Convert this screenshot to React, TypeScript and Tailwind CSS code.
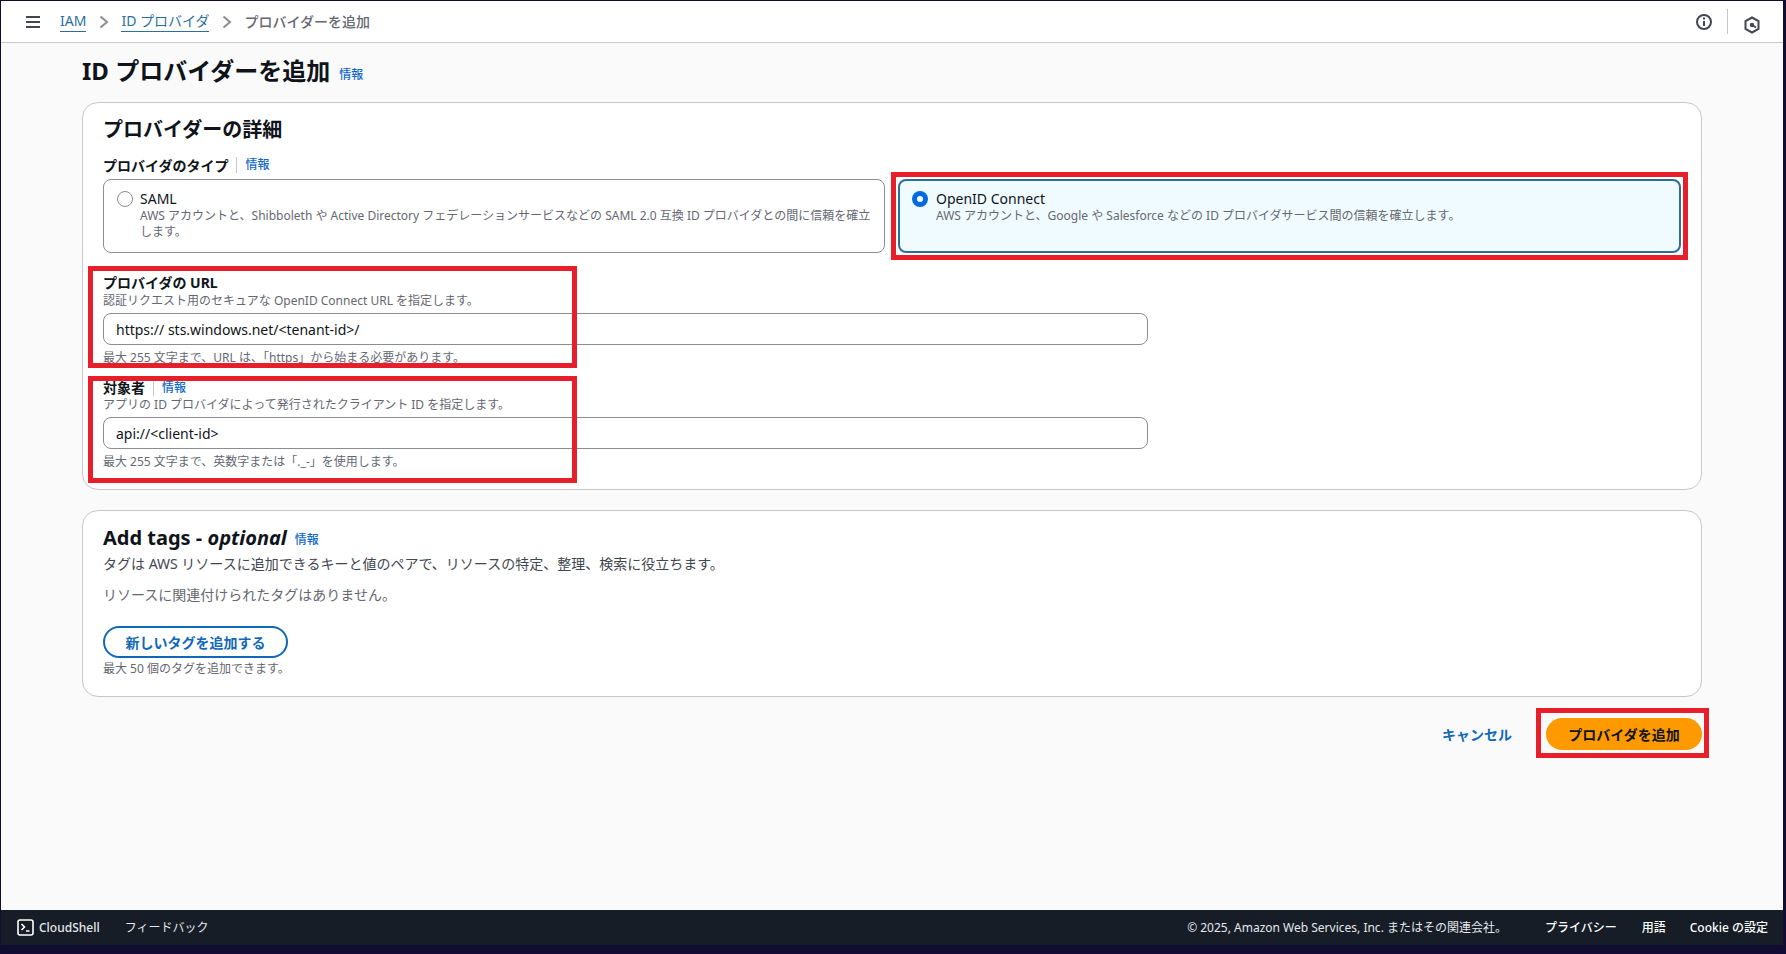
const font = "font-['Noto_Sans','Noto_Sans_CJK_JP',sans-serif]";

const Info = ({ className = "" }: { className?: string }) => (
  <a className={`text-[12px] leading-4 font-medium text-[#1068c9] ${className}`}>情報</a>
);

const Chevron = () => (
  <svg width="10" height="14" viewBox="0 0 10 14" fill="none" stroke="#8c8c94" strokeWidth="2">
    <path d="M1.5 1.5 8 7l-6.5 5.5" />
  </svg>
);

const Annotation = ({ className }: { className: string }) => (
  <div className={`absolute border-[5px] border-[#e71f2b] pointer-events-none ${className}`} />
);

const TextField = ({ value }: { value: string }) => (
  <input
    readOnly
    value={value}
    className="mt-[4px] h-[32px] w-[1045px] rounded-lg border border-[#8c8c94] bg-white px-3 text-[14px] text-[#0f141a] outline-none"
  />
);

export default function App() {
  return (
    <div className={`${font} flex h-[954px] w-[1786px] flex-col overflow-hidden bg-[#120b32] pt-[1px] pl-[1px] pr-[3px] text-[#0f141a]`}>
      <header className="flex h-[42px] shrink-0 items-center border-b border-[#c6c6cd] bg-white">
        <svg className="ml-[24px]" width="16" height="14" viewBox="0 0 16 14" fill="none" stroke="#424650" strokeWidth="2">
          <path d="M1 2h14M1 7h14M1 12h14" />
        </svg>
        <nav className="ml-[19px] flex items-center text-[14px] leading-5">
          <a className="border-b border-[#2a6f9f] text-[#2a6f9f]">IAM</a>
          <span className="ml-[13px] mr-[12px]"><Chevron /></span>
          <a className="border-b border-[#2a6f9f] text-[#2a6f9f]">ID プロバイダ</a>
          <span className="ml-[13px] mr-[12px]"><Chevron /></span>
          <span className="font-medium text-[#656871]">プロバイダーを追加</span>
        </nav>
        <div className="ml-auto flex items-center">
          <svg width="18" height="18" viewBox="0 0 18 18" fill="none" stroke="#424650" strokeWidth="2">
            <circle cx="9" cy="9" r="7" />
            <path d="M9 8v5M9 4.5v2" />
          </svg>
          <div className="ml-[14px] h-[25px] w-px bg-[#c6c6cd]" />
          <svg className="ml-[16px] mt-[6px]" width="16" height="18" viewBox="0 0 16 18" fill="none" stroke="#424650" strokeWidth="2">
            <path d="M8 1.5 14.5 5v8L8 16.5 1.5 13V5z" />
            <circle cx="8" cy="9" r="2.2" fill="#424650" stroke="none" />
            <path d="M8 9l4 2.5" />
          </svg>
          <div className="w-[23px]" />
        </div>
      </header>

      <main className="flex-1 bg-[#fafafa] px-[81px] pt-[12px]">
        <div className="flex h-[32px] items-center">
          <h1 className="text-[24px] leading-8 font-bold">ID プロバイダーを追加</h1>
          <Info className="ml-[9px] mt-[7px]" />
        </div>

        <section className="mt-[15px] h-[388px] rounded-2xl border border-[#c6c6cd] bg-white px-[20px] pt-[15px]">
          <h2 className="text-[20px] leading-6 font-bold">プロバイダーの詳細</h2>
          <div className="mt-[13px] flex h-[20px] items-center">
            <span className="text-[14px] font-bold">プロバイダのタイプ</span>
            <span className="mx-[8px] h-[16px] w-px bg-[#c6c6cd]" />
            <Info />
          </div>
          <div className="mt-[4px] grid h-[74px] grid-cols-[782px_783px] gap-[13px]">
            <div className="flex rounded-lg border border-[#8c8c94] px-[13px] pt-[10px]">
              <span className="mt-px h-[16px] w-[16px] shrink-0 rounded-full border border-[#8c8c94] bg-white" />
              <div className="ml-[7px]">
                <div className="text-[14px] leading-[18px]">SAML</div>
                <p className="text-[12px] leading-4 text-[#656871]">
                  AWS アカウントと、Shibboleth や Active Directory フェデレーションサービスなどの SAML 2.0 互換 ID プロバイダとの間に信頼を確立します。
                </p>
              </div>
            </div>
            <div className="relative flex rounded-lg border-2 border-[#2a6f97] bg-[#f0fbff] px-[12px] pt-[9px]">
              <Annotation className="-inset-[9px]" />
              <span className="mt-px flex h-[16px] w-[16px] shrink-0 items-center justify-center rounded-full bg-[#006ce0]">
                <span className="h-[6px] w-[6px] rounded-full bg-white" />
              </span>
              <div className="ml-[8px]">
                <div className="text-[14px] leading-[18px]">OpenID Connect</div>
                <p className="text-[12px] leading-4 text-[#656871]">
                  AWS アカウントと、Google や Salesforce などの ID プロバイダサービス間の信頼を確立します。
                </p>
              </div>
            </div>
          </div>

          <div className="relative mt-[20px]">
            <Annotation className="-left-[15px] -top-[7px] h-[102px] w-[489px]" />
            <label className="block text-[14px] leading-5 font-bold">プロバイダの URL</label>
            <p className="text-[12px] leading-4 text-[#656871]">認証リクエスト用のセキュアな OpenID Connect URL を指定します。</p>
            <TextField value="https:// sts.windows.net/<tenant-id>/" />
            <p className="mt-[5px] text-[12px] leading-4 text-[#656871]">最大 255 文字まで、URL は、「https」から始まる必要があります。</p>
          </div>

          <div className="relative mt-[12px]">
            <Annotation className="-left-[15px] -top-[2px] h-[107px] w-[489px]" />
            <div className="flex h-[19px] items-center">
              <label className="text-[14px] font-bold">対象者</label>
              <span className="mx-[8px] h-[16px] w-px bg-[#c6c6cd]" />
              <Info />
            </div>
            <p className="text-[12px] leading-4 text-[#656871]">アプリの ID プロバイダによって発行されたクライアント ID を指定します。</p>
            <TextField value="api://<client-id>" />
            <p className="mt-[5px] text-[12px] leading-4 text-[#656871]">最大 255 文字まで、英数字または「._-」を使用します。</p>
          </div>
        </section>

        <section className="mt-[20px] h-[187px] rounded-2xl border border-[#c6c6cd] bg-white px-[20px] pt-[15px]">
          <div className="flex h-[24px] items-center">
            <h2 className="text-[20px] leading-6 font-bold">
              Add tags - <i className="font-bold">optional</i>
            </h2>
            <Info className="ml-[8px] mt-[3px]" />
          </div>
          <p className="mt-[4px] text-[14px] leading-5 text-[#424650]">タグは AWS リソースに追加できるキーと値のペアで、リソースの特定、整理、検索に役立ちます。</p>
          <p className="mt-[11px] text-[14px] leading-5 text-[#656871]">リソースに関連付けられたタグはありません。</p>
          <button className="mt-[21px] block h-[32px] w-[185px] rounded-full border-2 border-[#1068b8] text-[14px] font-bold text-[#1068b8]">
            新しいタグを追加する
          </button>
          <p className="mt-[3px] text-[12px] leading-4 text-[#656871]">最大 50 個のタグを追加できます。</p>
        </section>

        <div className="mt-[21px] flex items-center justify-end">
          <a className="text-[14px] font-bold text-[#1068b8]">キャンセル</a>
          <div className="relative ml-[34px] h-[32px] w-[156px]">
            <Annotation className="-bottom-[8px] -left-[10px] -right-[7px] -top-[10px]" />
            <button className="h-full w-full rounded-full bg-[#ff9900] text-[14px] font-bold text-[#0f141a]">
              プロバイダを追加
            </button>
          </div>
        </div>
      </main>

      <footer className="mb-[9px] flex h-[35px] shrink-0 items-center bg-[#161d26] pl-[16px] pr-[15px] text-[12px] text-[#e5e7eb]">
        <svg width="17" height="17" viewBox="0 0 17 17" fill="none" stroke="#ffffff" strokeWidth="1.6">
          <rect x="1" y="1" width="15" height="15" rx="2" />
          <path d="M4.5 5 7.5 8 4.5 11M9 12h3.5" />
        </svg>
        <span className="ml-[5px] font-medium">CloudShell</span>
        <span className="ml-[25px]">フィードバック</span>
        <span className="ml-auto">© 2025, Amazon Web Services, Inc. またはその関連会社。</span>
        <span className="ml-[38px] font-medium text-white">プライバシー</span>
        <span className="ml-[25px] font-medium text-white">用語</span>
        <span className="ml-[24px] font-medium text-white">Cookie の設定</span>
      </footer>
    </div>
  );
}
